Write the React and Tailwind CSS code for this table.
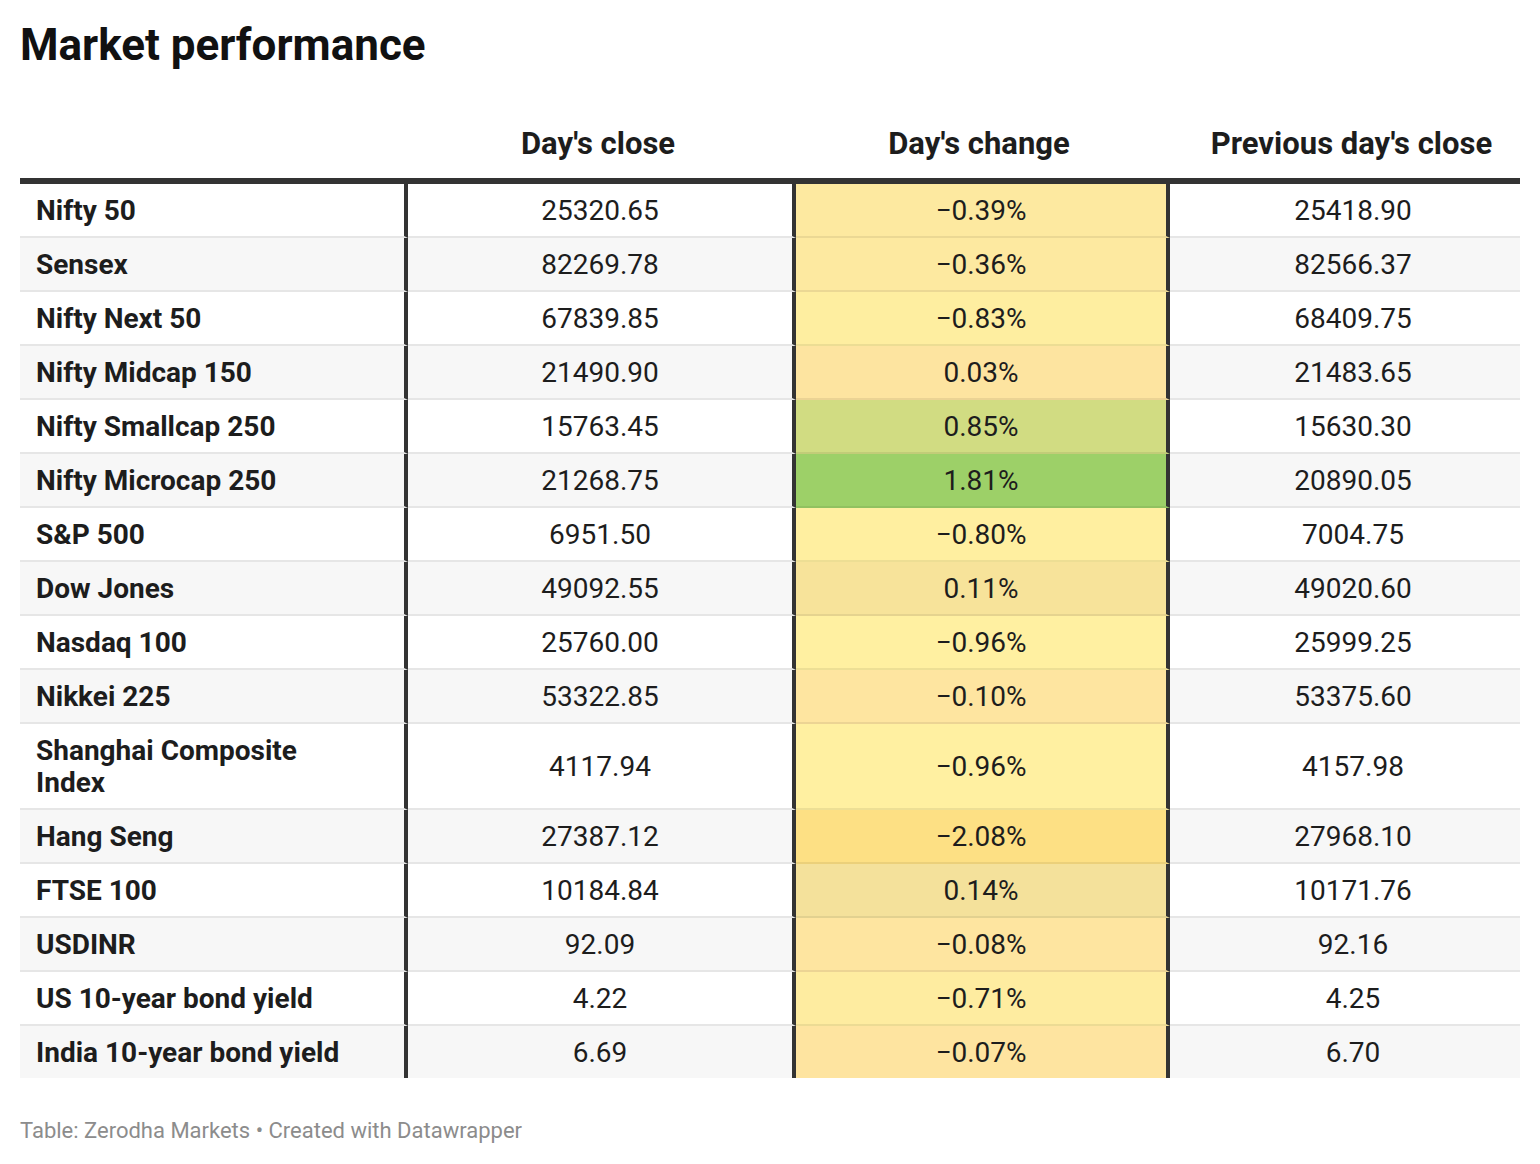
const rows = [
  { name: "Nifty 50", close: "25320.65", change: "−0.39%", prev: "25418.90", bg: "bg-[#fde9a0]" },
  { name: "Sensex", close: "82269.78", change: "−0.36%", prev: "82566.37", bg: "bg-[#fde9a0]" },
  { name: "Nifty Next 50", close: "67839.85", change: "−0.83%", prev: "68409.75", bg: "bg-[#feeea0]" },
  { name: "Nifty Midcap 150", close: "21490.90", change: "0.03%", prev: "21483.65", bg: "bg-[#fde4a0]" },
  { name: "Nifty Smallcap 250", close: "15763.45", change: "0.85%", prev: "15630.30", bg: "bg-[#d1dc82]" },
  { name: "Nifty Microcap 250", close: "21268.75", change: "1.81%", prev: "20890.05", bg: "bg-[#9dd068]" },
  { name: "S&P 500", close: "6951.50", change: "−0.80%", prev: "7004.75", bg: "bg-[#ffefa0]" },
  { name: "Dow Jones", close: "49092.55", change: "0.11%", prev: "49020.60", bg: "bg-[#f7e39a]" },
  { name: "Nasdaq 100", close: "25760.00", change: "−0.96%", prev: "25999.25", bg: "bg-[#fff0a1]" },
  { name: "Nikkei 225", close: "53322.85", change: "−0.10%", prev: "53375.60", bg: "bg-[#fee5a0]" },
  { name: "Shanghai Composite Index", close: "4117.94", change: "−0.96%", prev: "4157.98", bg: "bg-[#fff0a1]" },
  { name: "Hang Seng", close: "27387.12", change: "−2.08%", prev: "27968.10", bg: "bg-[#fde084]" },
  { name: "FTSE 100", close: "10184.84", change: "0.14%", prev: "10171.76", bg: "bg-[#f4e19b]" },
  { name: "USDINR", close: "92.09", change: "−0.08%", prev: "92.16", bg: "bg-[#fee5a0]" },
  { name: "US 10-year bond yield", close: "4.22", change: "−0.71%", prev: "4.25", bg: "bg-[#feeca0]" },
  { name: "India 10-year bond yield", close: "6.69", change: "−0.07%", prev: "6.70", bg: "bg-[#fee4a0]" },
];

const Row = ({ row, index, last }) => {
  const stripe = index % 2 === 1 ? "bg-[#f7f7f7]" : "bg-white";
  const line = last ? "" : "border-b-2";
  return (
    <div className={`grid grid-cols-[388px_388px_374px_350px] text-[28px] leading-[32px] ${stripe}`}>
      <div className={`flex items-center pl-4 pr-[50px] pt-[11px] pb-[9px] font-bold border-r-4 border-r-[#333] border-b-[#e6e6e6] ${line}`}>
        {row.name}
      </div>
      <div className={`flex items-center justify-center pt-[11px] pb-[9px] border-r-4 border-r-[#333] border-b-[#e6e6e6] ${line}`}>
        {row.close}
      </div>
      <div className={`flex items-center justify-center pt-[11px] pb-[9px] border-r-4 border-r-[#333] border-b-black/[0.07] ${row.bg} ${line}`}>
        {row.change}
      </div>
      <div className={`flex items-center justify-center pl-4 pt-[11px] pb-[9px] border-b-[#e6e6e6] ${line}`}>
        {row.prev}
      </div>
    </div>
  );
};

export default function App() {
  return (
    <div className="bg-white min-h-[1164px] px-5 pt-[18px] font-['Roboto','Liberation_Sans',sans-serif] text-[#1d1d1d]">
      <h1 className="text-[44px] leading-[54px] font-bold text-[#111]">Market performance</h1>

      <div className="w-[1500px] mt-[56px]">
        <div className="grid grid-cols-[388px_388px_374px_350px] text-[31px] leading-[32px] font-bold pb-[18px] border-b-[6px] border-[#333]">
          <div></div>
          <div className="text-center pr-2">Day's close</div>
          <div className="text-center pr-2">Day's change</div>
          <div className="text-center pl-4 pr-[3px]">Previous day's close</div>
        </div>
        {rows.map((row, i) => (
          <Row key={row.name} row={row} index={i} last={i === rows.length - 1} />
        ))}
      </div>

      <p className="mt-[38px] text-[22px] leading-[30px] text-[#8c8c8c]">
        Table: Zerodha Markets • Created with Datawrapper
      </p>
    </div>
  );
}
